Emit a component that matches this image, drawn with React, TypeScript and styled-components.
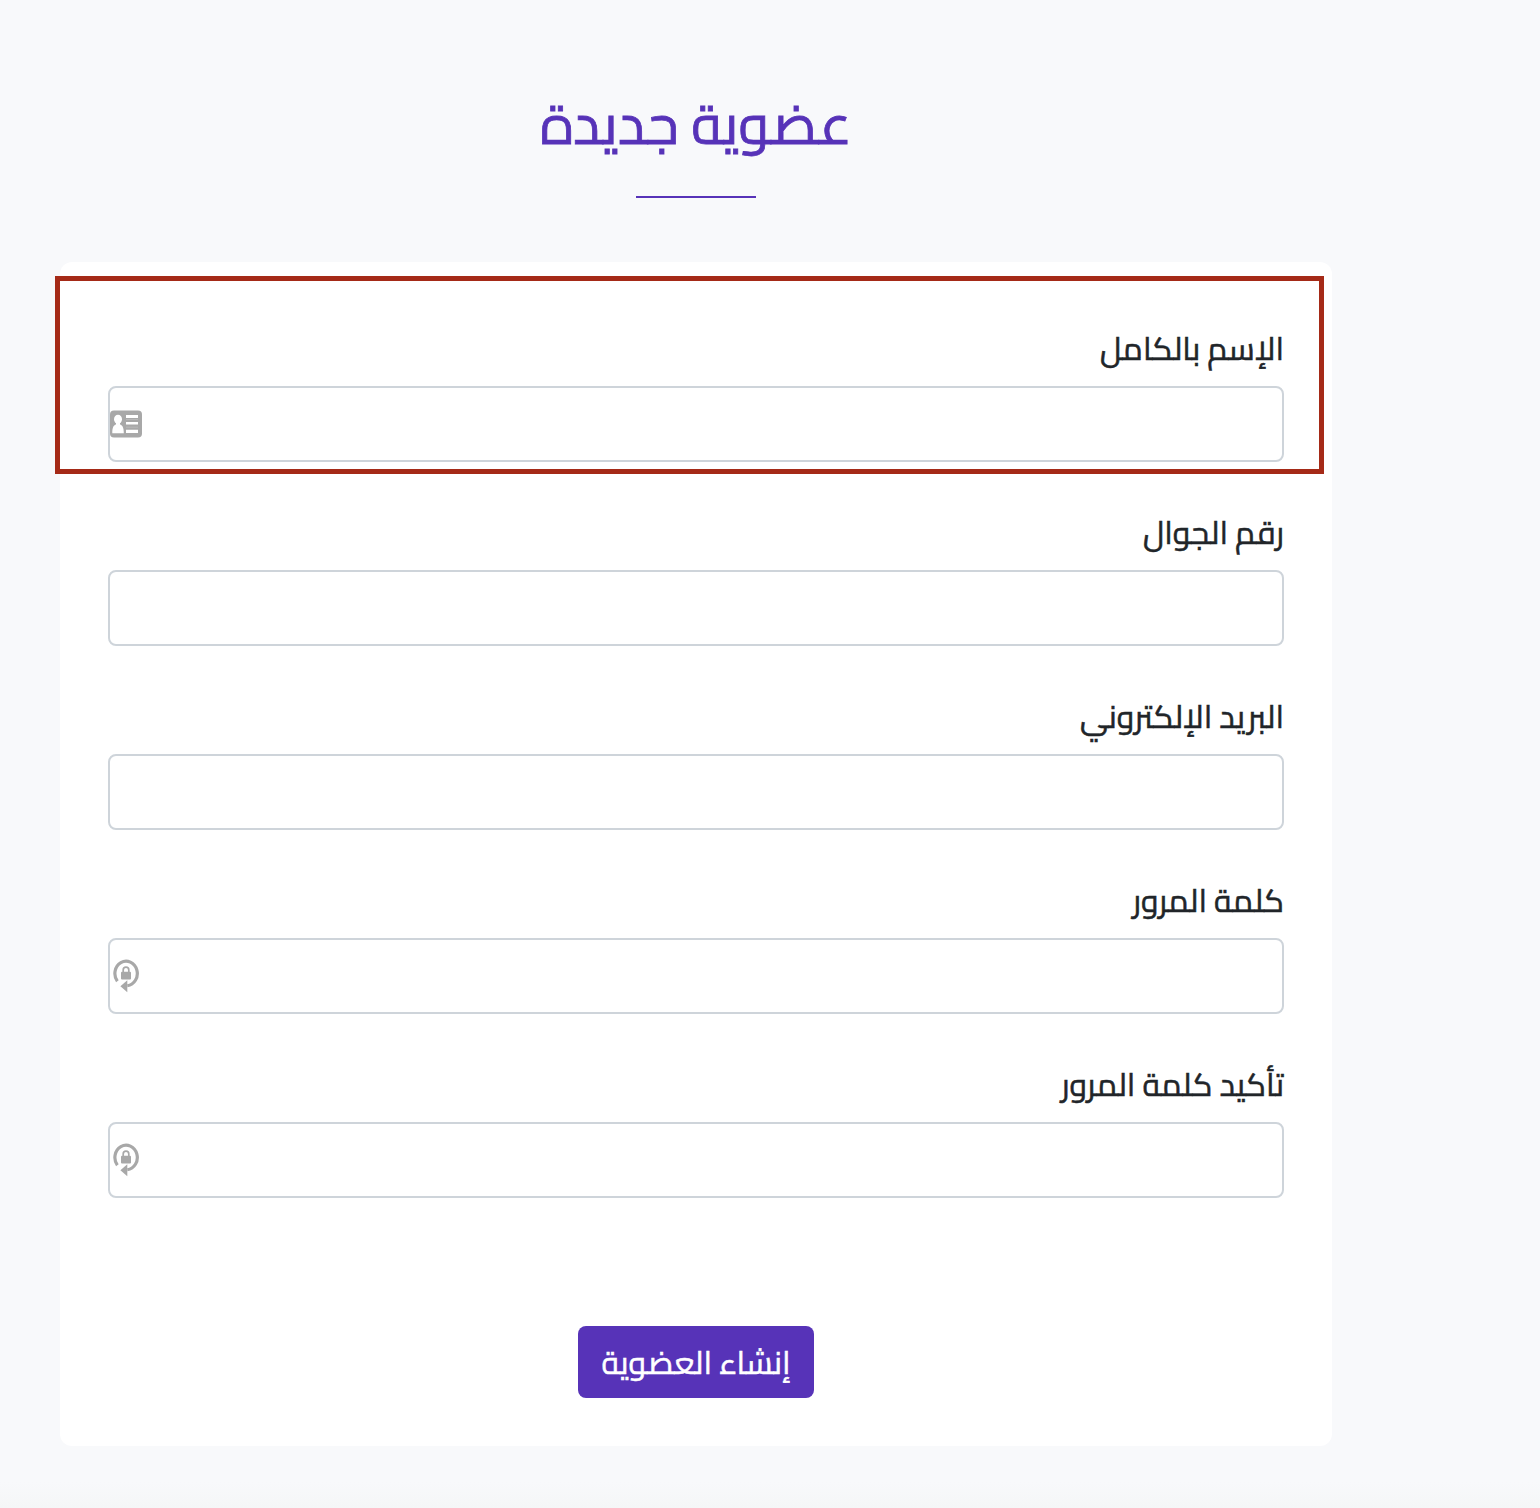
import React from "react";
import styled, { createGlobalStyle } from "styled-components";

const GlobalStyle = createGlobalStyle`
  * { box-sizing: border-box; }
  body {
    margin: 0;
    background: #f8f9fb;
    color: #212529;
    font-family: Cairo, "DejaVu Sans", sans-serif;
  }
`;

const Page = styled.main`
  direction: rtl;
  min-height: 1508px;
  padding: 76px 208px 62px 60px;
  display: flex;
  flex-direction: column;
  background: linear-gradient(to bottom, #f8f9fb calc(100% - 26px), #f5f6f7 100%);
`;

const Heading = styled.header`
  height: 122px;
  margin-bottom: 64px;
  display: flex;
  flex-direction: column;
  align-items: center;
  justify-content: space-between;
`;

const Title = styled.h1`
  margin: 0;
  color: #5733b8;
  font-size: 56px;
  font-weight: 400;
  line-height: 96px;
  white-space: nowrap;
  -webkit-text-stroke: 0.8px #5733b8;
`;

const Rule = styled.div`
  width: 120px;
  height: 2px;
  background: #5733b8;
`;

const Card = styled.form`
  position: relative;
  height: 1184px;
  padding: 62px 48px 48px;
  display: flex;
  flex-direction: column;
  gap: 46px;
  background: #fff;
  border-radius: 12px;
`;

const Highlight = styled.div`
  position: absolute;
  top: 14px;
  left: -5px;
  width: 1269px;
  height: 198px;
  border: 5px solid #a52a17;
  pointer-events: none;
`;

const Field = styled.div`
  display: flex;
  flex-direction: column;
  align-items: flex-start;
  gap: 14px;
`;

const Label = styled.label`
  font-size: 32px;
  line-height: 48px;
  white-space: nowrap;
  -webkit-text-stroke: 0.5px #212529;
`;

const InputBox = styled.div`
  width: 100%;
  height: 76px;
  display: flex;
  align-items: center;
  border: 2px solid #ced4da;
  border-radius: 8px;
  background: #fff;
`;

const Input = styled.input`
  flex: 1;
  min-width: 0;
  height: 100%;
  padding: 0 24px;
  border: 0;
  outline: 0;
  background: transparent;
  font: inherit;
  font-size: 32px;
`;

const Icon = styled.svg`
  flex: none;
  width: 32px;
  height: 34px;
  display: block;
`;

const Submit = styled.button`
  width: 236px;
  height: 72px;
  margin: auto auto 0;
  padding: 0;
  display: flex;
  align-items: center;
  justify-content: center;
  border: 0;
  border-radius: 8px;
  background: #5733b8;
  color: #fff;
  font: inherit;
  font-size: 32px;
  line-height: 48px;
  white-space: nowrap;
  -webkit-text-stroke: 0.5px #fff;
`;

const ContactIcon = () => (
  <Icon viewBox="0 0 32 34" aria-hidden="true">
    <rect x="0" y="3.4" width="32" height="27.2" rx="4" fill="#a8a8a8" />
    <g fill="#fff">
      <ellipse cx="8" cy="12.300" rx="4" ry="4.600" />
      <path d="M6 15.500h4v2c2.500.8 3.800 3 3.800 8.700H2.300C2.300 20.500 3.500 18.300 6 17.500z" />
      <path d="M16 8h12v3H16zM16 15h12v2.600H16zM16 22.700h12v3.200H16z" />
    </g>
    <path d="M16 12.500h12M16 20.200h12" stroke="#b8b8b8" strokeWidth="1" />
  </Icon>
);

const PasswordIcon = () => (
  <Icon viewBox="0 0 32 34" aria-hidden="true">
    <path d="M7.360 22.200A11.200 12.300 0 1 1 17.300 26.730" fill="none" stroke="#a8a8a8" strokeWidth="3.200" />
    <path d="M10.400 27.200L17.300 21.300V33.200z" fill="#a8a8a8" />
    <rect x="11" y="12.800" width="10" height="7.800" rx="1" fill="#a8a8a8" />
    <path d="M13.200 13.500V10.900a2.800 2.800 0 0 1 5.600 0v2.600" fill="none" stroke="#a8a8a8" strokeWidth="1.700" />
  </Icon>
);

const fields = [
  { id: "name", label: "الإسم بالكامل", type: "text", icon: <ContactIcon /> },
  { id: "phone", label: "رقم الجوال", type: "tel", icon: null },
  { id: "email", label: "البريد الإلكتروني", type: "email", icon: null },
  { id: "password", label: "كلمة المرور", type: "password", icon: <PasswordIcon /> },
  { id: "confirm", label: "تأكيد كلمة المرور", type: "password", icon: <PasswordIcon /> },
];

export default function App() {
  return (
    <>
      <GlobalStyle />
      <Page lang="ar">
        <Heading>
          <Title>عضوية جديدة</Title>
          <Rule />
        </Heading>
        <Card>
          {fields.map((f) => (
            <Field key={f.id}>
              <Label htmlFor={f.id}>{f.label}</Label>
              <InputBox>
                <Input id={f.id} type={f.type} />
                {f.icon}
              </InputBox>
            </Field>
          ))}
          <Submit type="button">إنشاء العضوية</Submit>
          <Highlight />
        </Card>
      </Page>
    </>
  );
}
